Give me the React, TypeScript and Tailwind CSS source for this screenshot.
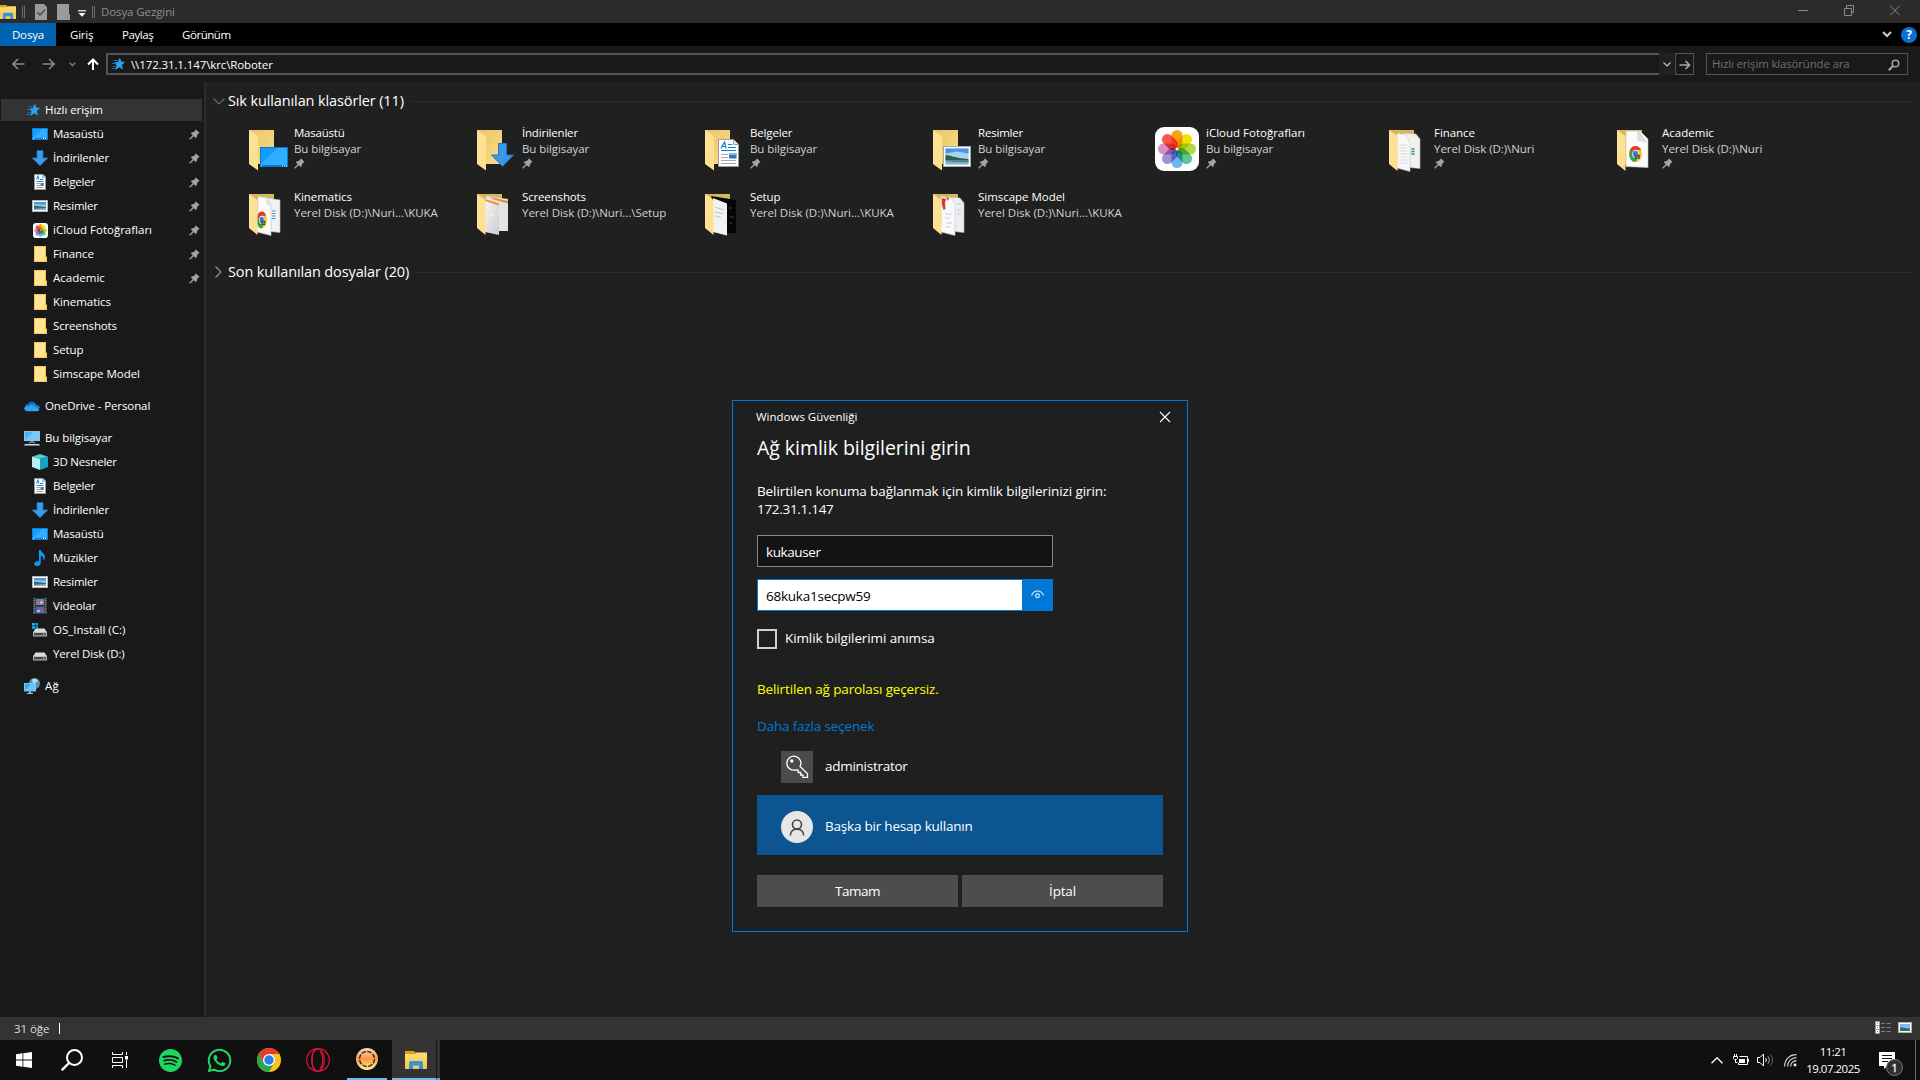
import type { ReactNode } from "react";
import { SiSpotify } from "react-icons/si";
import { FaWhatsapp } from "react-icons/fa";

/* ---------- small icons (16px) ---------- */

const Pin = () => (
  <svg width="11" height="11" viewBox="0 0 11 11" className="block shrink-0">
    <path d="M6.8 0.3 10.6 4 9.4 4.6 7.9 6.4 7.6 8.6 6.6 8.9 4.7 7.2 1.2 10.6 0.3 10.5 0.4 9.6 3.7 6.2 2 4.4 2.4 3.4 4.7 3 6.3 1.5Z" fill="#9aa5ae" />
  </svg>
);

const Star = () => (
  <svg width="16" height="16" viewBox="0 0 16 16" className="block shrink-0">
    <path d="M8.8 1.5 10.2 5.600 14 6 10.900 8.900 12 13.600 8.400 11.200 4.200 14 5.600 9.600 3.400 6.600 7 5.900Z" fill="#2ba3f3" />
    <path d="M2.600 4.500h4.400M1 7.500h4M2 10.500h3.400M.5 12.500h4" stroke="#1474b8" strokeWidth="1" />
  </svg>
);

const Desktop = () => (
  <svg width="16" height="16" viewBox="0 0 16 16" className="block shrink-0">
    <rect x="0" y="2" width="16" height="12" fill="#0d7fd8" />
    <path d="M1 3h14v9H1z" fill="#15a0ff" />
    <path d="M1 12 10 3h5v9z" fill="#31aeff" />
    <path d="M1 12.5h1M11 12.5h1M13 12.5h1" stroke="#fff" strokeWidth="1" />
  </svg>
);

const Down = () => (
  <svg width="16" height="16" viewBox="0 0 16 16" className="block shrink-0">
    <path d="M5 0.5h6V8h4.8L8 15.7 0.2 8H5z" fill="#3a9bea" stroke="#2373bf" strokeWidth=".7" />
  </svg>
);

const Doc = () => (
  <svg width="16" height="16" viewBox="0 0 16 16" className="block shrink-0">
    <path d="M2.5.5h8.5l2.5 2.5v12.5h-11z" fill="#fff" stroke="#9a9a9a" />
    <path d="M10.5 0.5v3h3" fill="#ddd" stroke="#9a9a9a" strokeWidth=".8" />
    <path d="M4.2 5.6 6 2.2l1 3.4M8 5.5h3.5M4.5 7.5h7" stroke="#1e88d8" fill="none" strokeWidth="1.1" />
    <path d="M4.5 9.5H8M4.5 11.5H8M4.5 13.5h7" stroke="#a0a0a0" />
    <rect x="8.5" y="9" width="3.2" height="3" fill="#3d7fb5" />
  </svg>
);

const Picture = () => (
  <svg width="16" height="16" viewBox="0 0 16 16" className="block shrink-0">
    <rect x=".5" y="2.5" width="15" height="11" fill="#fff" stroke="#b5b5b5" />
    <rect x="2" y="4" width="12" height="8" fill="#8ec4f0" />
    <path d="M2 4h12v2.4L2 6z" fill="#4b93dc" />
    <path d="M2 8c3-.8 6 1 12 1v3H2z" fill="#3c6b66" />
    <path d="M2 11c4-.8 8-.6 12-1v2H2z" fill="#7fb0c8" />
  </svg>
);

const petals = ["#fba21c", "#f2e400", "#b5d84a", "#5cc795", "#6fb6ea", "#a094d2", "#dc8fc6", "#f8584a"];

const PetalRing = () => (
  <g className="isolate">
    <rect width="44" height="44" rx="9" fill="#fff" />
    {petals.map((c, i) => (
      <rect key={c} x="16.500" y="3" width="11" height="18" rx="5.500" fill={c} className="mix-blend-multiply" transform={`rotate(${i * 45} 22 22)`} />
    ))}
  </g>
);

const Photos = () => (
  <svg width="15" height="15" viewBox="0 0 44 44" className="block shrink-0">
    <PetalRing />
  </svg>
);

const Folder = () => (
  <svg width="16" height="16" viewBox="0 0 16 16" className="block shrink-0">
    <path d="M2 0h12v10.5h1V16H2z" fill="#f0c750" />
    <path d="M3 1h10v9.5h-.8V15H3z" fill="#ffe694" />
    <path d="M12.6 11h1.4v4h-1.4z" fill="#ffdf80" />
  </svg>
);

const OneDrive = () => (
  <svg width="16" height="16" viewBox="0 0 16 16" className="block shrink-0">
    <path d="M1 9.5C.6 7.5 2 6.2 3.6 6.1 5.2 3 9.6 2.4 11.6 5.8 9 7 5 9 1 11z" fill="#0f6cbd" />
    <path d="M7.5 6.6c1.6-1.8 4.6-1.5 5.2.7 2 0 3.3 1.2 3.2 3L13 11z" fill="#1683d8" />
    <path d="M.2 10.6C.4 8.6 2 7.6 4 8l3.5-1.2 7.8 4.4c-.4 1.4-1.3 2-2.8 2H3.4C1.6 13.200.3 12.100.2 10.600z" fill="#30a5ee" />
  </svg>
);

const Computer = () => (
  <svg width="16" height="16" viewBox="0 0 16 16" className="block shrink-0">
    <rect x=".5" y="1.500" width="15" height="9" fill="#4bb4f5" stroke="#8fc4e6" />
    <path d="M1 10 9 2h6v8z" fill="#75c9fb" />
    <path d="M6.500 11h3v1.200h-3zM4.500 12h7v1h-7z" fill="#5f8eac" />
    <path d="M1 14h14l1 1.500H0z" fill="#d3dbe0" />
  </svg>
);

const Cube = () => (
  <svg width="16" height="16" viewBox="0 0 16 16" className="block shrink-0">
    <path d="M0 2.800 8 0l8 2.800L8 5z" fill="#4fcbdc" />
    <path d="M0 2.800 8 5v11L0 13z" fill="#b6eff4" />
    <path d="M16 2.800 8 5v11l8-3z" fill="#14a4c4" />
  </svg>
);

const Music = () => (
  <svg width="16" height="16" viewBox="0 0 16 16" className="block shrink-0">
    <path d="M7 0h1.800c.2 2.600 4.600 3.600 4.200 7.600-.1 1.300-.7 2.300-1.400 3C12 7.800 10.600 6.300 8.800 5.800V13c0 1.800-1.600 3-3.600 3C3.400 16 2.200 15.200 2.200 13.800c0-1.800 2.300-3 4.800-2.500z" fill="#0a9bf5" />
  </svg>
);

const Video = () => (
  <svg width="16" height="16" viewBox="0 0 16 16" className="block shrink-0">
    <rect x="1" y="0" width="14" height="16" fill="#3b3b3b" />
    <path d="M2.500 0v16M13.500 0v16" stroke="#8a8a8a" strokeWidth="1.400" strokeDasharray="1 1" />
    <rect x="4" y="1" width="8" height="6" fill="#4d86d8" />
    <rect x="4" y="9" width="8" height="6" fill="#3f6fd0" />
    <path d="M4 4h4v3H4z" fill="#c65a9a" />
    <path d="M8 3h3v3H8z" fill="#d8b43a" />
    <path d="M8 10h3v3H8z" fill="#c3473e" />
    <path d="M5 12h3v2H5z" fill="#8fc1f2" />
  </svg>
);

const Drive = ({ os }: { os?: boolean }) => (
  <svg width="16" height="16" viewBox="0 0 16 16" className="block shrink-0">
    <path d="M3.500 6.500h9L15 10.500H1z" fill="#dcdcdc" />
    <rect x="1" y="10" width="14" height="4.500" rx=".6" fill="#bdbdbd" />
    <rect x="2" y="11" width="12" height="2.500" fill="#4a4a4a" />
    <rect x="11" y="11.600" width="1.600" height="1.400" fill="#4ee04e" />
    {os && <path d="M0 1h3v2.500H0zM3.700 1H6v2.500H3.700zM0 4.200h3v2.500H0zM3.700 4.200H6v2.500H3.700z" fill="#12b3ee" />}
  </svg>
);

const Network = () => (
  <svg width="16" height="16" viewBox="0 0 16 16" className="block shrink-0">
    <circle cx="10.500" cy="5.500" r="5.500" fill="#4f94b8" />
    <path d="M8 1.500c2-1.500 5-.5 6 1.500-1 2-4 1-5 3z" fill="#b9dcea" />
    <rect x=".5" y="5.500" width="11" height="7.500" fill="#35a6ee" stroke="#7dc4ee" />
    <path d="M1 12.500 7 6h4v6.500z" fill="#6cc6fb" />
    <path d="M5 13.500h2V15H5zM3 15h6v1H3z" fill="#b8c4cc" />
  </svg>
);

/* ---------- large tile icons ---------- */

const FolderBack = () => (
  <>
    <path d="M1 4h25v34H1z" fill="url(#fback)" />
    <path d="M1 4l8 5.500 1 1V44.500L1 38z" fill="url(#fflap)" />
  </>
);

const Big = ({ children }: { children?: ReactNode }) => (
  <svg width="44" height="44" viewBox="0 0 44 44" className="block shrink-0 overflow-visible">
    {children}
  </svg>
);

const BigDesktop = () => (
  <Big>
    <FolderBack />
    <rect x="12" y="21" width="28" height="20" fill="#0b78cf" />
    <path d="M13 22h26v17H13z" fill="#0f9dff" />
    <path d="M13 38 30 22h9v17H13z" fill="#2fadff" />
    <path d="M13 40h1M34 40h1M36 40h1M38 40h1" stroke="#fff" />
  </Big>
);

const BigDown = () => (
  <Big>
    <FolderBack />
    <path d="M22.500 17.500h8V29h7L26.500 40.300 15.500 29h7z" fill="#3a98ea" stroke="#2373bf" />
  </Big>
);

const BigDoc = () => (
  <Big>
    <FolderBack />
    <path d="M14.500 13.500h15l5 5v22h-20z" fill="#fff" stroke="#9b9b9b" />
    <path d="M29.500 13.500v5h5" fill="#e4e4e4" stroke="#9b9b9b" />
    <path d="M17 22.500 20.500 16l1.500 6.500M18.500 20.500h3M24 18.500h4M24 21.500h8M17 24.500h15" stroke="#1583d2" strokeWidth="1.200" fill="none" />
    <path d="M17 28.500h7M17 31.500h7M17 34.500h15M17 37.500h15" stroke="#a8a8a8" />
    <rect x="25" y="27" width="7.500" height="5.500" fill="#3b78a8" />
    <path d="M25 27h7.500v2H25z" fill="#7fb8ea" />
  </Big>
);

const BigPicture = () => (
  <Big>
    <FolderBack />
    <rect x="11.500" y="20.500" width="27" height="20" fill="#fff" stroke="#a8a8a8" />
    <rect x="13.500" y="22.500" width="23" height="16" fill="#a9d0f5" />
    <path d="M13.500 22.500h23v5l-12-2-11 2z" fill="#4d94e4" />
    <path d="M13.500 29c5 0 8 3 23 4v2h-23z" fill="#2e5f48" />
    <path d="M13.500 34.500h23v4h-23z" fill="#86b7c9" />
    <path d="M13.500 36c8-1.500 14-1.500 23-1v1.200z" fill="#4c8090" />
  </Big>
);

const BigPhotos = () => (
  <Big>
    <g transform="translate(-5 1)">
      <PetalRing />
      <circle cx="22" cy="22" r="1.200" fill="#fff" />
    </g>
  </Big>
);

const ChromeBadge = ({ x, y, r }: { x: number; y: number; r: number }) => (
  <g transform={`translate(${x} ${y}) scale(${r / 12})`}>
    <ChromeShape />
    <rect x="-1" y="1" width="9" height="6" fill="#39424d" />
    <path d="M0 3h5M2 5h5" stroke="#c7ccd2" />
  </g>
);

function ChromeShape() {
  return (
    <>
      <circle r="12" fill="#fbc116" />
      <path d="M-10.400-6A12 12 0 0 1 10.400-6L0-6-5 3z" fill="#e33b2e" />
      <path d="M-10.400-6A12 12 0 0 0 0 12L5.200 3-5.200 3z" fill="#2da44e" />
      <circle r="6" fill="#fff" />
      <circle r="4.700" fill="#2b7de9" />
    </>
  );
}

const FolderOpen = ({ children }: { children?: ReactNode }) => (
  <Big>
    <path d="M1 4h25v34H1z" fill="#d8b65a" />
    {children}
    <path d="M1 4l8.500 6V45L1 38z" fill="url(#fflap)" />
  </Big>
);

const BigKinematics = () => (
  <FolderOpen>
    <path d="M15 7l11 2 6 1v32.500l-10-1z" fill="#f1f1f1" stroke="#b9b9b9" strokeWidth=".6" />
    <path d="M24 21h3.500M24 23.500h3.500M24 26h3.500M24 28.500h3.500" stroke="#4e8fd0" />
    <path d="M10 6.500 19 8l4 7v30.500L9 42z" fill="#fbfbfb" stroke="#c4c4c4" strokeWidth=".6" />
    <path d="M18.500 8v6.500l4.500 1z" fill="#ddd" />
    <g transform="translate(4.500 0) scale(.6 1)"><ChromeBadge x={15.500} y={30} r={8.500} /></g>
  </FolderOpen>
);

const BigScreens = () => (
  <FolderOpen>
    <path d="M10 6l22 3v32l-12 0z" fill="#e3e3e3" />
    <path d="M14 7l18 4v2.500L18 9.500z" fill="#e98a34" />
    <path d="M9 8l14 5v32L9 42z" fill="url(#paper)" />
    <path d="M9 9l14 4.500v2L9 11z" fill="#ee8b34" />
    <path d="M14 24c1 3 3 3 4 0" stroke="#fff" fill="none" />
  </FolderOpen>
);

const BigSetup = () => (
  <FolderOpen>
    <path d="M7 6l25 4v33l-12 0z" fill="#050505" />
    <path d="M25 18h3M26 27h4M25 33h3" stroke="#444" />
    <path d="M9 8l14 5.500v32L9 42z" fill="#f1f3f3" />
    <path d="M11 17l9 3M11 22l9 2M11 26l6 1" stroke="#c3c8cb" />
  </FolderOpen>
);

const BigSimscape = () => (
  <FolderOpen>
    <path d="M15 7l13 1 4 5v29.500l-10-1z" fill="#eceef1" stroke="#b9b9b9" strokeWidth=".6" />
    <path d="M25 14h4M25 20h4M25 24h4" stroke="#c2cad6" />
    <path d="M9 6.500 19 8l4 6v31.500L9 42z" fill="#f8f9fb" stroke="#c4c4c4" strokeWidth=".6" />
    <path d="M10 8l4 1-1 4 .5 6-2 1-2-7z" fill="#cf3b2f" />
    <path d="M14 7.500l3 .500-1 3z" fill="#cf3b2f" />
    <path d="M13 24h7M13 28h5M14 33h6M13 37h5" stroke="#c9d0da" />
  </FolderOpen>
);

const BigFinance = () => (
  <FolderOpen>
    <path d="M15 7l13 1 4 5v29.500l-10-1z" fill="#f1f1f1" stroke="#b9b9b9" strokeWidth=".6" />
    <path d="M23.500 23h3M23.500 25.500h3M23.500 28h3" stroke="#2f9d6a" strokeWidth="1.400" />
    <path d="M9 7l9 2 4 8v28.500L9 42z" fill="#f7f7f7" stroke="#c4c4c4" strokeWidth=".6" />
    <path d="M11.500 19h7M11.500 22h8M11.500 25h8M11.500 28h8M11.500 31h8M11.500 34h8M11.500 37h8" stroke="#dadada" />
  </FolderOpen>
);

const BigAcademic = () => (
  <FolderOpen>
    <path d="M10 5l14 0 8 8v28.500L10 40.500z" fill="#fbfbfb" stroke="#c4c4c4" strokeWidth=".6" />
    <path d="M22 5v9l8 2z" fill="#e2e2e2" stroke="#bbb" strokeWidth=".5" />
    <g transform="translate(3.500 0) scale(.8 1)"><ChromeBadge x={20} y={28} r={8} /></g>
  </FolderOpen>
);

const Defs = () => (
  <svg width="0" height="0" className="absolute">
    <defs>
      <linearGradient id="fback" x1="0" y1="0" x2="1" y2="1">
        <stop offset="0" stopColor="#e9c767" />
        <stop offset="1" stopColor="#fbdc86" />
      </linearGradient>
      <linearGradient id="fflap" x1="0" y1="0" x2="1" y2="1">
        <stop offset="0" stopColor="#fbe29b" />
        <stop offset="1" stopColor="#ffe08a" />
      </linearGradient>
      <linearGradient id="paper" x1="0" y1="0" x2="1" y2="1">
        <stop offset="0" stopColor="#f7f7f7" />
        <stop offset="1" stopColor="#cccccc" />
      </linearGradient>
      <linearGradient id="coin" x1="0" y1="0" x2="0" y2="1">
        <stop offset="0" stopColor="#fbd9bd" />
        <stop offset=".5" stopColor="#ff9640" />
        <stop offset="1" stopColor="#fff3a0" />
      </linearGradient>
      <linearGradient id="fold" x1="0" y1="0" x2="0" y2="1">
        <stop offset="0" stopColor="#ffdc74" />
        <stop offset="1" stopColor="#f6c84c" />
      </linearGradient>
    </defs>
  </svg>
);

const ExplorerIcon = ({ className }: { className: string }) => (
  <svg viewBox="0 0 22 18" className={className} preserveAspectRatio="none">
    <path d="M0 0h9l1.500 1.500V4H0z" fill="#e0a112" />
    <path d="M0 3h10l1-1.500h11V18H0z" fill="url(#fold)" />
    <path d="M4 18v-6.500L5.500 10h11l1.500 1.500V18h-4v-3.500H8V18z" fill="#3594e0" />
  </svg>
);

/* ---------- explorer ---------- */

const TitleBar = () => (
  <div className="flex h-[23px] items-center bg-[#2b2b2b]">
    <ExplorerIcon className="block h-[14px] w-4" />
    <div className="ml-[6px] h-[12px] w-[3px] border-x border-[#6d6d6d]" />
    <svg width="12" height="16" viewBox="0 0 12 16" className="ml-[10px]">
      <path d="M0 0h9l3 3v13H0z" fill="#9b9b9b" />
      <path d="M2.500 8.500 5 11l5-5.500" stroke="#555" strokeWidth="1.800" fill="none" />
    </svg>
    <svg width="13" height="16" viewBox="0 0 13 16" className="ml-[10px]">
      <path d="M0 0h12v10h1v6H0z" fill="#9b9b9b" />
      <path d="M10.500 11v4" stroke="#818181" />
    </svg>
    <svg width="8" height="7" viewBox="0 0 8 7" className="ml-2 mt-[3px]">
      <path d="M0 .8h8" stroke="#fff" strokeWidth="1.200" />
      <path d="M.5 3h7L4 6.800z" fill="#fff" />
    </svg>
    <div className="ml-[6px] h-[12px] w-[3px] border-x border-[#6d6d6d]" />
    <span className="ml-[6px] whitespace-nowrap text-[11.5px] leading-[22px] tracking-[-0.1px] text-[#8f8f8f]">Dosya Gezgini</span>
    <div className="mb-[3px] ml-auto mr-[20px] flex items-center gap-[36px]">
      <svg width="10" height="11" viewBox="0 0 10 11"><path d="M0 5.500h10" stroke="#8a8a8a" /></svg>
      <svg width="10" height="11" viewBox="0 0 10 11" fill="none" stroke="#8a8a8a"><path d="M.5 3.500h7v7h-7zM2.500 3.500v-3h7v7h-2" /></svg>
      <svg width="10" height="11" viewBox="0 0 10 11"><path d="M0 .5l10 10M10 .5l-10 10" stroke="#8a8a8a" /></svg>
    </div>
  </div>
);

const Ribbon = () => (
  <div className="flex h-[23px] items-center bg-black text-[11.5px] leading-[23px] text-white">
    <div className="w-[56px] bg-[#0063b1] text-center tracking-[-0.15px]">Dosya</div>
    <span className="ml-[14px] w-[52px] tracking-[-0.2px]">Giriş</span>
    <span className="w-[60px] tracking-[-0.4px]">Paylaş</span>
    <span className="tracking-[-0.45px]">Görünüm</span>
    <svg width="10" height="7" viewBox="0 0 10 7" className="ml-auto"><path d="M1 1l4 4 4-4" stroke="#c9c9c9" strokeWidth="2" fill="none" /></svg>
    <div className="ml-[9px] mr-[3px] flex h-[16px] w-4 items-center justify-center rounded-full bg-[#0a6fd1] text-[12px] font-bold leading-4">?</div>
  </div>
);

const NavBar = () => (
  <div className="flex h-[36px] items-center bg-[#191919]">
    <svg width="13" height="12" viewBox="0 0 13 12" className="ml-[12px]"><path d="M12.500 6H1.500M6 1 1 6l5 5" stroke="#8a8a8a" strokeWidth="1.600" fill="none" /></svg>
    <svg width="13" height="12" viewBox="0 0 13 12" className="ml-[17px]"><path d="M.5 6h11M7 1l5 5-5 5" stroke="#8a8a8a" strokeWidth="1.600" fill="none" /></svg>
    <svg width="7" height="5" viewBox="0 0 7 5" className="ml-[14px]"><path d="M.7.700 3.500 3.700 6.300.700" stroke="#7a7a7a" strokeWidth="1.500" fill="none" /></svg>
    <svg width="12" height="12" viewBox="0 0 12 12" className="ml-[11px]"><path d="M6 12V1.500M1 6.500l5-5 5 5" stroke="#fff" strokeWidth="2" fill="none" /></svg>
    <div className="ml-[7px] flex h-[22px] w-[1553px] items-center border-y-2 border-l-2 border-[#535353] bg-[#191919] pl-[3px]">
      <Star />
      <span className="ml-[4px] whitespace-nowrap pt-[2px] text-[11.5px] leading-[18px] tracking-[-0.11px] text-white">{"\\\\172.31.1.147\\krc\\Roboter"}</span>
    </div>
    <div className="flex h-[22px] w-[15px] items-center justify-center bg-[#202020]">
      <svg width="8" height="5" viewBox="0 0 8 5" className="mt-px"><path d="M.5.500 4 4l3.500-3.500" stroke="#c4c4c4" strokeWidth="1.200" fill="none" /></svg>
    </div>
    <div className="ml-[1px] flex h-[22px] w-[19px] items-center justify-center border border-[#535353]">
      <svg width="12" height="10" viewBox="0 0 12 10" className="mt-px"><path d="M.5 5h10M6.500 1l4 4-4 4" stroke="#a6a6a6" strokeWidth="1.700" fill="none" /></svg>
    </div>
    <div className="ml-[12px] flex h-[22px] w-[202px] items-center justify-between border border-[#535353] pl-[5px] pr-[7px]">
      <span className="whitespace-nowrap text-[11.5px] leading-5 tracking-[-0.17px] text-[#6f6f6f]">Hızlı erişim klasöründe ara</span>
      <svg width="12" height="12" viewBox="0 0 12 12" className="mt-px"><circle cx="7.500" cy="4.500" r="3.300" stroke="#a5a5a5" strokeWidth="1.500" fill="none" /><path d="M5 7 .700 11.300" stroke="#a5a5a5" strokeWidth="2" /></svg>
    </div>
  </div>
);

type Item = { icon: ReactNode; label: string; track: string; pin?: boolean; root?: boolean; selected?: boolean; gap?: boolean };

const items: Item[] = [
  { icon: <Star />, label: "Hızlı erişim", track: "tracking-[-0.06px]", root: true, selected: true },
  { icon: <Desktop />, label: "Masaüstü", track: "tracking-[-0.23px]", pin: true },
  { icon: <Down />, label: "İndirilenler", track: "tracking-[-0.2px]", pin: true },
  { icon: <Doc />, label: "Belgeler", track: "tracking-[-0.2px]", pin: true },
  { icon: <Picture />, label: "Resimler", track: "tracking-[-0.25px]", pin: true },
  { icon: <Photos />, label: "iCloud Fotoğrafları", track: "tracking-[0px]", pin: true },
  { icon: <Folder />, label: "Finance", track: "tracking-[-0.07px]", pin: true },
  { icon: <Folder />, label: "Academic", track: "tracking-[0.02px]", pin: true },
  { icon: <Folder />, label: "Kinematics", track: "tracking-[-0.06px]" },
  { icon: <Folder />, label: "Screenshots", track: "tracking-[-0.15px]" },
  { icon: <Folder />, label: "Setup", track: "tracking-[-0.12px]" },
  { icon: <Folder />, label: "Simscape Model", track: "tracking-[-0.03px]" },
  { icon: <OneDrive />, label: "OneDrive - Personal", track: "tracking-[-0.1px]", root: true, gap: true },
  { icon: <Computer />, label: "Bu bilgisayar", track: "tracking-[-0.08px]", root: true, gap: true },
  { icon: <Cube />, label: "3D Nesneler", track: "tracking-[-0.2px]" },
  { icon: <Doc />, label: "Belgeler", track: "tracking-[-0.2px]" },
  { icon: <Down />, label: "İndirilenler", track: "tracking-[-0.2px]" },
  { icon: <Desktop />, label: "Masaüstü", track: "tracking-[-0.23px]" },
  { icon: <Music />, label: "Müzikler", track: "tracking-[-0.12px]" },
  { icon: <Picture />, label: "Resimler", track: "tracking-[-0.25px]" },
  { icon: <Video />, label: "Videolar", track: "tracking-[-0.15px]" },
  { icon: <Drive os />, label: "OS_Install (C:)", track: "tracking-[0px]" },
  { icon: <Drive />, label: "Yerel Disk (D:)", track: "tracking-[-0.15px]" },
  { icon: <Network />, label: "Ağ", track: "tracking-[0.2px]", root: true, gap: true },
];

const Sidebar = () => (
  <div className="w-[206px] shrink-0 border-r-2 border-[#2b2b2b] bg-[#191919] pt-4">
    {items.map((it, i) => (
      <div key={i} className={it.gap ? "mt-2" : ""}>
        <div className={`mx-px flex h-6 items-center pr-[3px] ${it.root ? "pl-[23px]" : "pl-[31px]"}`}>
          {it.selected ? (
            <div className="-ml-[23px] flex h-[22px] w-[201px] shrink-0 items-center bg-[#333333] pl-[25px]">
              {it.icon}
              <span className={`ml-[3px] whitespace-nowrap text-[11.5px] leading-[22px] text-white ${it.track}`}>{it.label}</span>
            </div>
          ) : (
            <>
              <div className="flex w-4 justify-center">{it.icon}</div>
              <span className={`ml-[5px] whitespace-nowrap text-[11.5px] leading-[22px] text-white ${it.track}`}>{it.label}</span>
              {it.pin && <div className="ml-auto"><Pin /></div>}
            </>
          )}
        </div>
      </div>
    ))}
  </div>
);

type TileData = { icon: ReactNode; name: string; sub: string; pin?: boolean; track: string; subTrack: string };

const tiles: TileData[] = [
  { icon: <BigDesktop />, name: "Masaüstü", sub: "Bu bilgisayar", pin: true, track: "tracking-[-0.23px]", subTrack: "tracking-[-0.08px]" },
  { icon: <BigDown />, name: "İndirilenler", sub: "Bu bilgisayar", pin: true, track: "tracking-[-0.2px]", subTrack: "tracking-[-0.08px]" },
  { icon: <BigDoc />, name: "Belgeler", sub: "Bu bilgisayar", pin: true, track: "tracking-[-0.15px]", subTrack: "tracking-[-0.08px]" },
  { icon: <BigPicture />, name: "Resimler", sub: "Bu bilgisayar", pin: true, track: "tracking-[-0.2px]", subTrack: "tracking-[-0.08px]" },
  { icon: <BigPhotos />, name: "iCloud Fotoğrafları", sub: "Bu bilgisayar", pin: true, track: "tracking-[0px]", subTrack: "tracking-[-0.08px]" },
  { icon: <BigFinance />, name: "Finance", sub: "Yerel Disk (D:)\\Nuri", pin: true, track: "tracking-[-0.05px]", subTrack: "tracking-[-0.05px]" },
  { icon: <BigAcademic />, name: "Academic", sub: "Yerel Disk (D:)\\Nuri", pin: true, track: "tracking-[0.02px]", subTrack: "tracking-[-0.05px]" },
  { icon: <BigKinematics />, name: "Kinematics", sub: "Yerel Disk (D:)\\Nuri...\\KUKA", track: "tracking-[-0.06px]", subTrack: "tracking-[-0.02px]" },
  { icon: <BigScreens />, name: "Screenshots", sub: "Yerel Disk (D:)\\Nuri...\\Setup", track: "tracking-[-0.15px]", subTrack: "tracking-[-0.05px]" },
  { icon: <BigSetup />, name: "Setup", sub: "Yerel Disk (D:)\\Nuri...\\KUKA", track: "tracking-[-0.12px]", subTrack: "tracking-[-0.02px]" },
  { icon: <BigSimscape />, name: "Simscape Model", sub: "Yerel Disk (D:)\\Nuri...\\KUKA", track: "tracking-[-0.03px]", subTrack: "tracking-[-0.02px]" },
];

const Section = ({ title, open }: { title: string; open?: boolean }) => (
  <div className="flex h-[38px] items-center pl-[7px] pr-2">
    <div className="flex w-[15px]">
      {open ? (
        <svg width="12" height="7" viewBox="0 0 12 7"><path d="M.5.500 6 6 11.500.500" stroke="#6a6a6a" strokeWidth="1.100" fill="none" /></svg>
      ) : (
        <svg width="7" height="12" viewBox="0 0 7 12" className="ml-[2px]"><path d="M.5.500 6 6 .500 11.500" stroke="#9a9a9a" strokeWidth="1.100" fill="none" /></svg>
      )}
    </div>
    <span className="whitespace-nowrap text-[14.5px] leading-[22px] tracking-[-0.12px] text-white">{title}</span>
    <div className="ml-[8px] h-px flex-1 bg-[#2e2e2e]" />
  </div>
);

const Content = () => (
  <div className="flex-1 bg-[#202020]">
    <Section title="Sık kullanılan klasörler (11)" open />
    <div className="grid grid-cols-[repeat(7,228px)] grid-rows-[64px_63px] pl-[42px] pt-[6px]">
      {tiles.map((t) => (
        <div key={t.name} className="flex gap-[2px]">
          {t.icon}
          <div className="-mt-px whitespace-nowrap text-[11.5px] leading-4">
            <div className={`text-white ${t.track}`}>{t.name}</div>
            <div className={`text-[#d2d2d2] ${t.subTrack}`}>{t.sub}</div>
            {t.pin && <div className="pt-px"><Pin /></div>}
          </div>
        </div>
      ))}
    </div>
    <Section title="Son kullanılan dosyalar (20)" />
  </div>
);

const StatusBar = () => (
  <div className="flex h-[23px] items-center bg-[#333333] pl-[14px] pr-2">
    <span className="whitespace-nowrap text-[11.5px] leading-[23px] tracking-[-0.05px] text-[#dcdcdc]">31 öğe</span>
    <div className="ml-[10px] h-[11px] w-px bg-white" />
    <svg width="16" height="13" viewBox="0 0 16 13" className="mb-[2px] ml-auto">
      <path d="M.5.500h4v12h-4z" fill="#fff" stroke="#9a9a9a" />
      <path d="M1 4.500h3M1 8.500h3" stroke="#9a9a9a" />
      <path d="M2 2.500h1M2 6.500h1" stroke="#4a9" /><path d="M2 10.500h1" stroke="#c33" />
      <path d="M6 2.500h4M11.500 2.500H16M6 6.500h4M11.500 6.500H16M6 10.500h4M11.500 10.500H16" stroke="#7d7d7d" />
    </svg>
    <svg width="14" height="11" viewBox="0 0 14 11" className="mb-[2px] ml-[7px]">
      <rect x=".5" y=".5" width="13" height="10" fill="#fff" stroke="#b0b0b0" />
      <rect x="2" y="2" width="10" height="7" fill="#7fbaf2" />
      <path d="M2 5.500c3-.5 6 1 10 1V9H2z" fill="#35695a" />
    </svg>
  </div>
);

/* ---------- taskbar ---------- */

const Taskbar = () => (
  <div className="flex h-10 items-stretch bg-[#101010]">
    <div className="flex w-12 items-center justify-center">
      <svg width="16" height="16" viewBox="0 0 16 16" fill="#fff"><path d="M0 2.200 6.500 1.300V7.600H0zM7.300 1.200 16 0V7.600H7.300zM0 8.400h6.500v6.300L0 13.800zM7.300 8.400H16V16L7.300 14.800z" /></svg>
    </div>
    <div className="flex w-12 items-center justify-center">
      <svg width="22" height="22" viewBox="0 0 22 22" fill="none" stroke="#fff"><circle cx="13.500" cy="8.500" r="7.500" strokeWidth="2" /><path d="M8 14 .800 21.200" strokeWidth="2.400" /></svg>
    </div>
    <div className="flex w-12 items-center justify-center">
      <svg width="16" height="16" viewBox="0 0 16 16" fill="none" stroke="#fff"><path d="M.5 0v2.500h10V0M.5 16v-2.500h10V16M.5 5.500h10v5H.5zM14.500 0v3M14.500 8v8" /><path d="M13 4h3v3.500h-3z" fill="#fff" stroke="none" /></svg>
    </div>
    <div className="flex w-[53px] items-center justify-center"><SiSpotify size={23} color="#1ed760" /></div>
    <div className="flex w-[45px] items-center justify-center"><FaWhatsapp size={27} color="#25d366" /></div>
    <div className="flex w-[54px] items-center justify-center">
      <svg width="24" height="24" viewBox="-12 -12 24 24"><ChromeShape /></svg>
    </div>
    <div className="flex w-[44px] items-center justify-center">
      <svg width="24" height="24" viewBox="0 0 24 24" fill="none" stroke="#d8143c" strokeWidth="1.200"><circle cx="12" cy="12" r="11.300" /><ellipse cx="12" cy="12" rx="6.300" ry="11" /><path d="M10 1.200c-5 1.800-5.500 19.800 0 21.600M14 3.500c3.600 3 3.600 14 0 17" /></svg>
    </div>
    <div className="ml-[7px] flex w-10 flex-col items-center border-b-2 border-[#76b9ed] pr-px pt-2">
      <svg width="22" height="22" viewBox="0 0 22 22"><circle cx="11" cy="11" r="11" fill="url(#coin)" /><circle cx="11" cy="11" r="7.500" fill="none" stroke="#33302c" strokeWidth="1.500" strokeDasharray="4.500 1.390" /></svg>
    </div>
    <div className="ml-[5px] flex w-[44px] flex-col items-center border-b-2 border-[#76b9ed] bg-[#333333] pl-[3px] pt-[11px]">
      <ExplorerIcon className="block h-[18px] w-[22px]" />
    </div>
    <div className="w-1 border-b-2 border-l border-b-[#6aa5d4] border-l-[#1a1a1a] bg-[#333333]" />
    <div className="ml-auto flex items-center">
      <svg width="12" height="7" viewBox="0 0 12 7"><path d="M.5 6.300 6 .800l5.500 5.500" stroke="#fff" strokeWidth="1.300" fill="none" /></svg>
      <svg width="16" height="12" viewBox="0 0 16 12" className="ml-[10px]" fill="none" stroke="#fff">
        <path d="M6.500 2.500h8v8h-9V9" />
        <path d="M6 5h6v4H6z" fill="#fff" stroke="none" />
        <path d="M15.500 5v3" />
        <path d="M1.500 0v2M3.500 0v2M.5 2.500h4v2l-1 1h-2l-1-1zM2.500 6v2.500h2" />
      </svg>
      <svg width="17" height="14" viewBox="0 0 17 14" className="ml-[8px]" fill="none" stroke="#fff">
        <path d="M.5 4.500H3l3.500-3.500v12L3 9.500H.5z" /><path d="M8.500 5c1 1.200 1 2.800 0 4" /><path d="M10.800 3.200c2 2.200 2 5.400 0 7.600" stroke="#aaa" /><path d="M13.300 1.300c3 3.400 3 8 0 11.400" stroke="#666" />
      </svg>
      <svg width="13" height="13" viewBox="0 0 13 13" className="ml-[10px] mt-px" fill="none" stroke="#d8d8d8" strokeWidth="1.100">
        <path d="M.6 12.500C.6 5.500 5.500.600 12.500.600M3.600 12.500c0-5.200 3.700-8.900 8.900-8.900M6.600 12.500c0-3.400 2.500-5.900 5.900-5.900" /><circle cx="11" cy="11" r="1.400" fill="#fff" stroke="none" />
      </svg>
      <div className="ml-[8px] mr-[2px] w-[56px] text-center text-[11.5px] leading-[18px] text-white">
        <div className="tracking-[-0.6px]">11:21</div>
        <div className="-mt-px whitespace-nowrap tracking-[-0.5px]">19.07.2025</div>
      </div>
      <svg width="24" height="25" viewBox="0 0 24 25" className="ml-[16px] mt-[8px]">
        <path d="M0 0h16v14H8l-3 3v-3H0z" fill="#fff" />
        <path d="M3 3.500h10M3 6.500h10M3 9.500h6" stroke="#101010" />
        <circle cx="15.500" cy="15.500" r="8" fill="#2f2f2f" stroke="#7b7b7b" />
        <text x="15.500" y="19.700" textAnchor="middle" fontSize="11.500" fill="#fff" stroke="#fff" strokeWidth=".3">1</text>
      </svg>
      <div className="ml-[12px] mr-1 h-10 w-px bg-[#6a6a6a]" />
    </div>
  </div>
);

/* ---------- credential dialog ---------- */

const Dialog = () => (
  <div className="absolute left-[732px] top-[400px] flex h-[532px] w-[456px] flex-col border border-[#0078d7] bg-[#1f1f1f] px-6 text-[13.5px] leading-[18px] text-white">
    <div className="flex h-[32px] items-center justify-between">
      <span className="-ml-px text-[11.5px] tracking-[-0.01px]">Windows Güvenliği</span>
      <svg width="12" height="12" viewBox="0 0 12 12" className="mr-[-8px]"><path d="M1 1l10 10M11 1 1 11" stroke="#fff" strokeWidth="1.100" /></svg>
    </div>
    <h1 className="mt-[1px] text-[19.5px] leading-[28px] tracking-[-0.04px]">Ağ kimlik bilgilerini girin</h1>
    <p className="mt-[20px] whitespace-nowrap tracking-[-0.1px]">Belirtilen konuma bağlanmak için kimlik bilgilerinizi girin:</p>
    <p className="tracking-[-0.3px]">172.31.1.147</p>
    <div className="mt-[17px] flex h-8 w-[296px] items-center border border-[#868686] bg-[#131313] pl-2 pt-[2px] tracking-[-0.4px]">kukauser</div>
    <div className="mt-3 flex h-8 w-[296px] items-center border border-[#0078d7] bg-white">
      <span className="flex-1 pl-2 pt-[2px] tracking-[-0.24px] text-black">68kuka1secpw59</span>
      <div className="flex h-8 w-[30px] items-center justify-center bg-[#0078d7] pl-px">
        <svg width="13" height="9" viewBox="0 0 13 9" fill="none" stroke="#e8f2fb" strokeWidth="1.100" className="mb-px"><path d="M.6 5.500C2.500-.500 10.500-.500 12.400 5.500" /><circle cx="6.500" cy="5.800" r="1.900" /></svg>
      </div>
    </div>
    <div className="mt-[18px] flex h-5 items-center">
      <div className="h-5 w-5 border-2 border-[#cfcfcf]" />
      <span className="ml-2 pb-[2px] tracking-[-0.11px]">Kimlik bilgilerimi anımsa</span>
    </div>
    <p className="mt-[31px] tracking-[-0.13px] text-[#ffff00]">Belirtilen ağ parolası geçersiz.</p>
    <p className="mt-[19px] tracking-[-0.17px] text-[#0078d7]">Daha fazla seçenek</p>
    <div className="mt-[16px] flex h-8 items-center pl-6">
      <div className="flex h-8 w-8 items-center justify-center bg-[#4b4b4b]">
        <svg width="24" height="24" viewBox="0 0 24 24" fill="none" stroke="#fff" strokeWidth="1.300"><path d="M15 11.500a7 7 0 1 0-4 3.300l2.200.2v2.500h2.500v2.500h2.200v2.300h4.600v-3.600z" /><circle cx="6.800" cy="6" r="1" fill="#fff" /></svg>
      </div>
      <span className="ml-3 pb-[2px] tracking-[-0.27px]">administrator</span>
    </div>
    <div className="mt-3 flex h-[60px] items-center bg-[#0c5591] pl-6 pt-1">
      <div className="flex h-8 w-8 items-center justify-center rounded-full bg-[#e6e6e6]">
        <svg width="16" height="17" viewBox="0 0 16 17" fill="none" stroke="#444" strokeWidth="1.600"><circle cx="8" cy="5.500" r="4.500" /><path d="M1.300 16.500c0-8.500 13.400-8.500 13.400 0" /></svg>
      </div>
      <span className="ml-3 pb-[2px] tracking-[-0.21px]">Başka bir hesap kullanın</span>
    </div>
    <div className="mt-5 flex gap-1 text-center leading-8">
      <div className="h-8 flex-1 bg-[#4d4d4d] tracking-[-0.45px]">Tamam</div>
      <div className="h-8 flex-1 bg-[#4d4d4d] tracking-[-0.2px]">İptal</div>
    </div>
  </div>
);

export default function App() {
  return (
    <div className="relative flex h-[1080px] w-[1920px] flex-col overflow-hidden bg-[#191919] font-['Open_Sans',sans-serif]">
      <Defs />
      <TitleBar />
      <Ribbon />
      <NavBar />
      <div className="flex min-h-0 flex-1">
        <Sidebar />
        <Content />
      </div>
      <StatusBar />
      <Taskbar />
      <Dialog />
    </div>
  );
}
